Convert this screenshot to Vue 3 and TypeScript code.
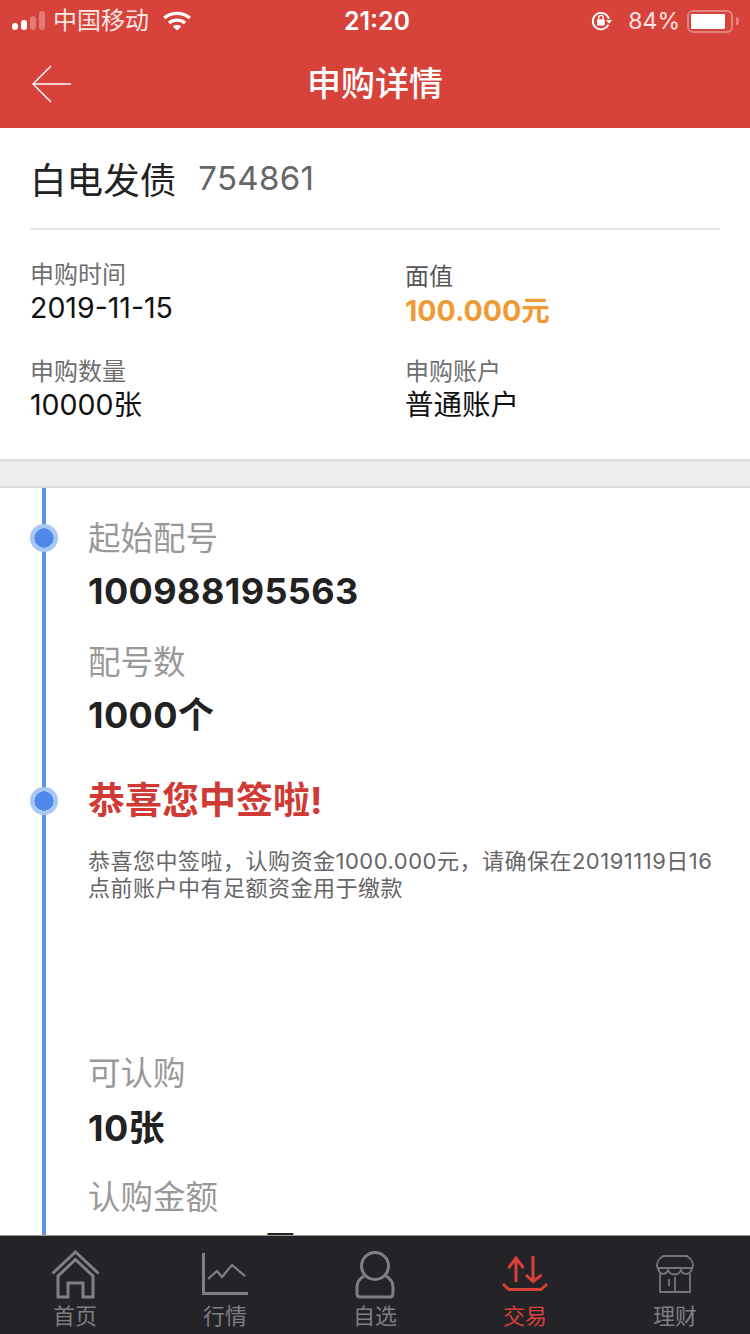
<script setup lang="ts">
interface Field { label: string; value: string; accent?: boolean }
const fields: Field[] = [
  { label: '申购时间', value: '2019-11-15' },
  { label: '面值', value: '100.000元', accent: true },
  { label: '申购数量', value: '10000张' },
  { label: '申购账户', value: '普通账户' },
]
const tabs = [
  { key: 'home', label: '首页' },
  { key: 'market', label: '行情' },
  { key: 'fav', label: '自选' },
  { key: 'trade', label: '交易' },
  { key: 'fin', label: '理财' },
]
</script>

<template>
  <div class="page">
    <header class="top">
      <div class="status">
        <div class="status-left">
          <span class="signal"><i class="on h1"></i><i class="on h2"></i><i class="h3"></i><i class="h4"></i></span>
          <span class="carrier">中国移动</span>
          <svg class="wifi" width="28" height="20" viewBox="0 0 28 20" fill="none" stroke="#fff" stroke-width="3.2">
            <path d="M1.2 7C8.5 .8 19.5 .8 26.8 7" />
            <path d="M6 12C10.5 8.2 17.5 8.2 22 12" />
            <path d="M14 19.5L9.8 15.4C12.2 13.6 15.8 13.6 18.2 15.4Z" fill="#fff" stroke="none" />
          </svg>
        </div>
        <div class="clock">21:20</div>
        <div class="status-right">
          <svg class="lock" width="22" height="20" viewBox="0 0 24 22" fill="none">
            <path d="M19.5 8.5A9 9 0 1 0 19 15" stroke="#fff" stroke-width="2" />
            <path d="M16.5 10H23L19.8 14Z" fill="#fff" />
            <rect x="6.5" y="9" width="8.5" height="7" rx="1" fill="#fff" />
            <path d="M8.3 9V7.2a2.5 2.5 0 0 1 5 0V9" stroke="#fff" stroke-width="1.4" />
          </svg>
          <span class="pct">84%</span>
          <span class="battery"><i></i></span>
          <span class="nub"></span>
        </div>
      </div>
      <div class="nav">
        <svg class="back" width="42" height="38" viewBox="0 0 42 38" fill="none" stroke="#fff" stroke-width="1.4">
          <path d="M40 19H2" />
          <path d="M20 1L2 19L20 37" />
        </svg>
        <h1 class="title">申购详情</h1>
      </div>
    </header>

    <main class="scroll">
      <section class="summary">
        <div class="name-row">
          <span class="name">白电发债</span>
          <span class="code">754861</span>
        </div>
        <div class="grid">
          <div v-for="f in fields" :key="f.label" class="field" :class="{ 'field-accent': f.accent }">
            <div class="f-label">{{ f.label }}</div>
            <div class="f-value" :class="{ accent: f.accent }">{{ f.value }}</div>
          </div>
        </div>
      </section>
      <div class="band"></div>
      <section class="timeline">
        <div class="node first">
          <span class="dot"></span>
          <div class="label">起始配号</div>
          <div class="big">100988195563</div>
          <div class="label second">配号数</div>
          <div class="big">1000个</div>
        </div>
        <div class="node notice">
          <span class="dot"></span>
          <div class="win">恭喜您中签啦!</div>
          <p class="desc">恭喜您中签啦，认购资金1000.000元，请确保在20191119日16点前账户中有足额资金用于缴款</p>
        </div>
        <div class="node last">
          <div class="label">可认购</div>
          <div class="big">10张</div>
          <div class="label second">认购金额</div>
          <div class="big final">1000.000元</div>
        </div>
      </section>
    </main>

    <nav class="tabbar">
      <div v-for="t in tabs" :key="t.key" class="tab" :class="{ active: t.key === 'trade' }">
        <svg v-if="t.key === 'home'" class="ico" width="50" height="50" viewBox="0 0 50 50" fill="none" stroke="#808083" stroke-width="3">
          <path d="M2.5 23.5L25.5 2L48.5 23.5" />
          <path d="M8 47V26L25.5 9.5L43 26V47H33V33H18V47Z" />
        </svg>
        <svg v-else-if="t.key === 'market'" class="ico" width="50" height="50" viewBox="0 0 50 50" fill="none" stroke="#808083" stroke-width="3">
          <path d="M3.5 3V43.5H48" />
          <path d="M8 29L17 21L22 27L32 15L45 26" stroke-width="2.2" />
        </svg>
        <svg v-else-if="t.key === 'fav'" class="ico" width="50" height="50" viewBox="0 0 50 50" fill="none" stroke="#808083" stroke-width="3">
          <circle cx="25" cy="16" r="13.5" />
          <path d="M14 26C9 29 7 33 7 37V43C7 46 8 47 10 47H40C42 47 43 46 43 43V37C43 33 41 29 36 26" />
        </svg>
        <svg v-else-if="t.key === 'trade'" class="ico" width="50" height="50" viewBox="0 0 50 50" fill="none" stroke="#d8403a" stroke-width="3">
          <path d="M16 8V32M8.5 18L16 8L23.5 18" />
          <path d="M33 6V31M26 25L33 31.5L41.5 25" />
          <path d="M3 34L9 39.5H41L47 34" />
        </svg>
        <svg v-else class="ico" width="50" height="50" viewBox="0 0 50 50" fill="none" stroke="#77777a" stroke-width="1.8">
          <path d="M13 6H37C40 8 43 12 43 15C43 17 42.5 18 42 18H8C7.5 18 7 17 7 15C7 12 10 8 13 6Z" />
          <path d="M8 18C9 25 16 26 18 20C20 26 29 26 31 20C33 26 41 25 42 18" />
          <path d="M10 24V42H40V24M25 27V42M19 29V36" />
        </svg>
        <span class="tab-text">{{ t.label }}</span>
      </div>
    </nav>
  </div>
</template>

<style>
html, body { margin: 0; padding: 0; background: #fff; }
</style>

<style scoped>
.page {
  width: 750px;
  height: 1334px;
  display: flex;
  flex-direction: column;
  overflow: hidden;
  font-family: Inter, "Noto Sans CJK SC", sans-serif;
  color: #222;
  background: #fff;
}
.top { background: #d7423b; color: #fff; height: 128px; flex: none; }
.status {
  height: 40px;
  display: grid;
  grid-template-columns: 1fr auto 1fr;
  align-items: center;
}
.status-left { display: flex; align-items: center; padding-left: 12px; }
.signal { display: flex; align-items: flex-end; gap: 3px; height: 20px; width: 33px; }
.signal i { width: 6px; border-radius: 3px; background: rgba(255,255,255,.3); display: block; margin-bottom: 1px; }
.signal .on { background: #fff; }
.h1 { height: 7px; }
.h2 { height: 10px; }
.h3 { height: 14px; }
.h4 { height: 19px; }
.carrier { margin-left: 8px; font-size: 24px; line-height: 32px; color: #fbe6e4; }
.wifi { margin-left: 14px; }
.clock { font-size: 25px; font-weight: 600; line-height: 42px; padding-left: 4px; }
.status-right { display: flex; align-items: center; justify-content: flex-end; padding-right: 11px; }
.lock { margin-right: 15px; }
.pct { font-size: 23px; line-height: 40px; margin-right: 7px; color: #fbe6e4; }
.battery {
  width: 38px; height: 15px; border: 2px solid rgba(255,255,255,.35); border-radius: 6px;
  padding: 2px; box-sizing: content-box; display: block;
}
.battery i { display: block; height: 100%; width: 34px; background: #fff; border-radius: 1px; }
.nub { width: 3px; height: 8px; background: rgba(255,255,255,.35); border-radius: 0 3px 3px 0; margin-left: 3px; }
.nav { height: 88px; position: relative; display: flex; align-items: center; justify-content: center; }
.back { position: absolute; left: 31px; top: 25px; }
.title { margin: 0; font-size: 34px; font-weight: 500; line-height: 88px; }
.scroll { flex: 1; min-height: 0; overflow: hidden; }
.summary { height: 331px; padding: 0 30px; box-sizing: border-box; }
.name-row {
  height: 100px; border-bottom: 2px solid #e8e8e8;
  display: flex; align-items: center; gap: 22px;
}
.name { font-size: 36.6px; color: #222; }
.code { font-size: 33px; color: #666; letter-spacing: .3px; }
.grid { display: grid; grid-template-columns: 375px 1fr; padding: 29px 0 0; row-gap: 30.5px; }
.field { height: 66px; }
.field-accent { padding-top: 2px; box-sizing: border-box; }
.f-label { font-size: 24px; line-height: 32px; color: #6f6f6f; }
.field-accent .f-label { color: #555; }
.f-value { font-size: 28.5px; line-height: 34px; color: #111; }
.f-value.accent { color: #f09a35; font-weight: 700; margin-top: 1px; }
.band { height: 29px; box-sizing: border-box; background: #ececec; border-top: 2px solid #dcdcdc; border-bottom: 2px solid #dcdcdc; }
.timeline { margin-left: 42px; border-left: 4px solid #5b93e8; padding-left: 42px; min-height: 900px; }
.node { position: relative; }
.node.first { padding-top: 30px; }
.dot {
  position: absolute; left: -58px; width: 20px; height: 20px; border-radius: 50%;
  background: #4f8aea; border: 4px solid #a9c7f4; background-clip: padding-box;
  box-sizing: content-box;
}
.first .dot { top: 36px; }
.notice .dot { top: 52px; }
.label { font-size: 32.5px; line-height: 42px; color: #999; }
.label.second { margin-top: 31px; }
.big { font-size: 36px; font-weight: 700; line-height: 40px; color: #222; margin-top: 11px; letter-spacing: .4px; }
.notice { padding-top: 44px; }
.win { font-size: 37px; font-weight: 700; line-height: 44px; color: #cf3a35; }
.desc { margin: 25px 0 0; font-size: 22px; line-height: 27px; color: #666; width: 632px; letter-spacing: .5px; }
.last { padding-top: 151px; }
.last .big { margin-top: 13px; }
.last .label.second { margin-top: 29px; }
.last .big.final { margin-top: 10px; }
.tabbar {
  height: 99px; flex: none; background: #242328; border-top: 1px solid #9a9a9a; box-sizing: border-box;
  display: grid; grid-template-columns: repeat(5, 1fr); padding: 0;
}
.tab { display: flex; flex-direction: column; align-items: center; padding-top: 14px; position: relative; }
.ico { display: block; }
.tab-text { font-size: 22px; line-height: 28px; color: #7f7f82; margin-top: 2px; }
.active .tab-text { color: #d8403a; }
</style>
